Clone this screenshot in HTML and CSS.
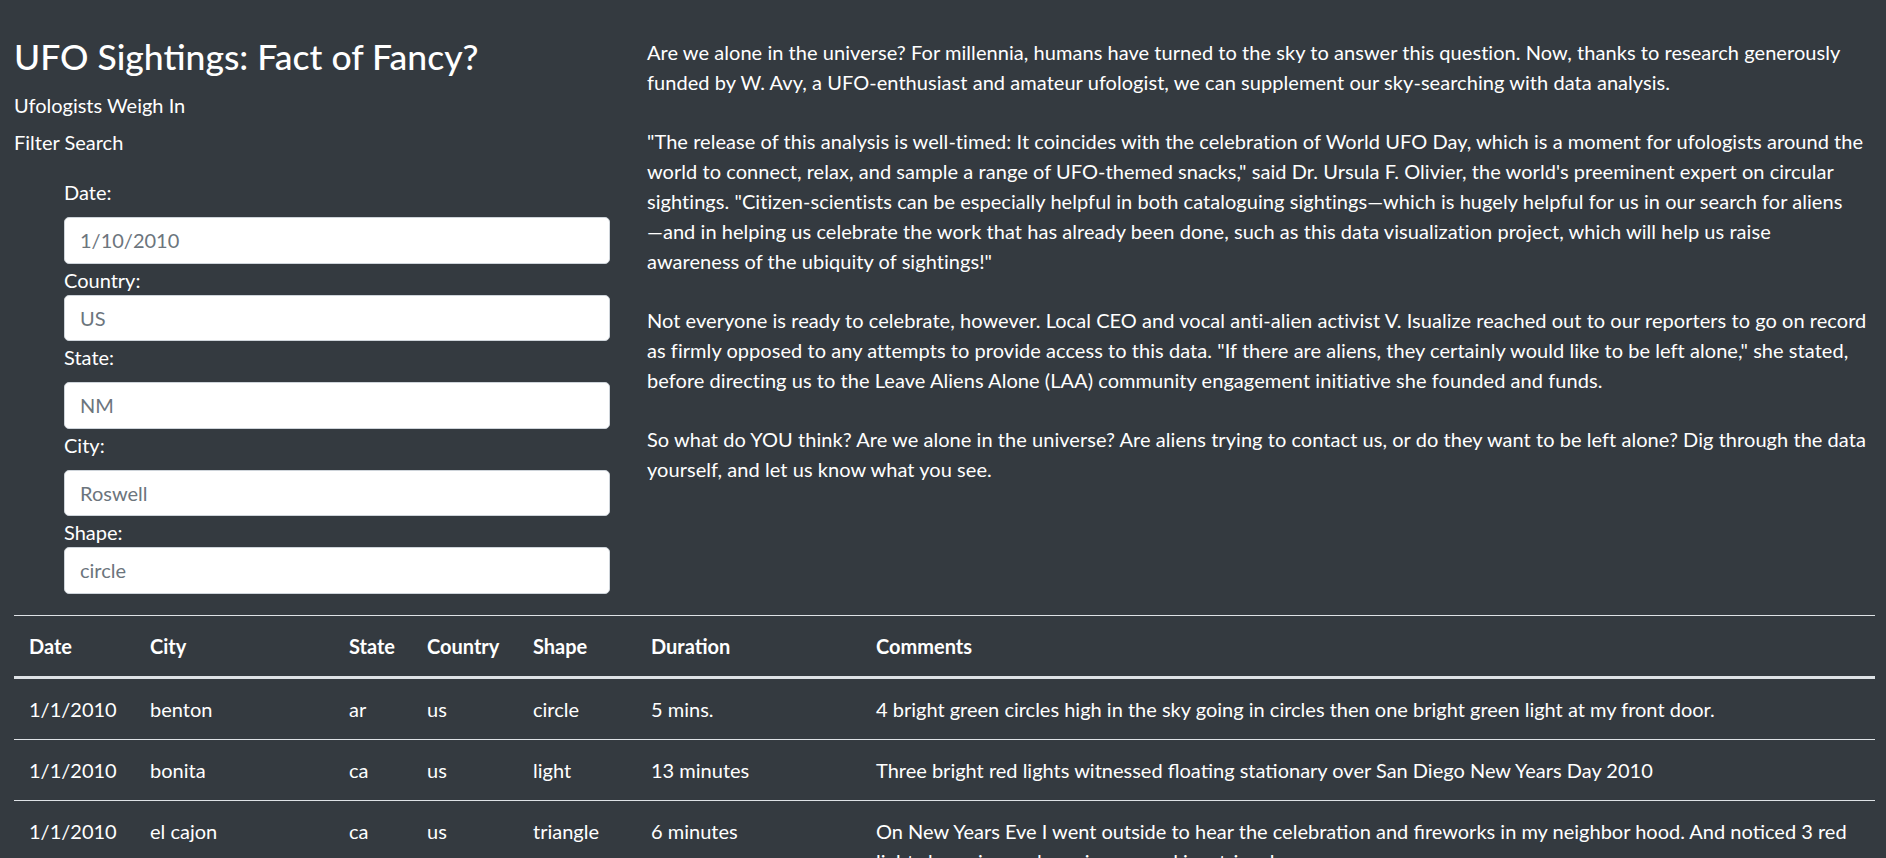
FILE: index.html
```html
<!DOCTYPE html>
<html lang="en">
<head>
<meta charset="utf-8">
<title>UFO Sightings</title>
<link rel="stylesheet" href="styles.css">
</head>
<body>
<div class="page">
  <div class="top">
    <div class="col-left">
      <h1 class="title">UFO Sightings: Fact of Fancy?</h1>
      <p class="sub sub-first">Ufologists Weigh In</p>
      <p class="sub">Filter Search</p>
      <form class="filters">
        <label class="lbl" for="date">Date:</label>
        <input class="field" id="date" type="text" placeholder="1/10/2010">
        <label class="lbl tight" for="country">Country:</label>
        <input class="field" id="country" type="text" placeholder="US">
        <label class="lbl" for="state">State:</label>
        <input class="field" id="state" type="text" placeholder="NM">
        <label class="lbl" for="city">City:</label>
        <input class="field" id="city" type="text" placeholder="Roswell">
        <label class="lbl tight" for="shape">Shape:</label>
        <input class="field" id="shape" type="text" placeholder="circle">
      </form>
    </div>
    <div class="col-right">
      <p>Are we alone in the universe? For millennia, humans have turned to the sky to answer this question. Now, thanks to research generously funded by W. Avy, a UFO-enthusiast and amateur ufologist, we can supplement our sky-searching with data analysis.</p>
      <p>"The release of this analysis is well-timed: It coincides with the celebration of World UFO Day, which is a moment for ufologists around the world to connect, relax, and sample a range of UFO-themed snacks," said Dr. Ursula F. Olivier, the world's preeminent expert on circular sightings. "Citizen-scientists can be especially helpful in both cataloguing sightings—which is hugely helpful for us in our search for aliens<span class="nowrap">—and</span> in helping us celebrate the work that has already been done, such as this data visualization project, which will help us raise <span class="nowrap">awareness of</span> the ubiquity of sightings!"</p>
      <p>Not everyone is ready to celebrate, however. Local CEO and vocal anti-alien activist V. Isualize reached out to our reporters to go on record as firmly opposed to any attempts to provide access to this data. "If there are aliens, they certainly would like to be left alone," she stated, before directing us to the Leave Aliens Alone (LAA) community engagement initiative she founded and funds.</p>
      <p>So what do YOU think? Are we alone in the universe? Are aliens trying to contact us, or do they want to be left alone? Dig through the data yourself, and let us know what you see.</p>
    </div>
  </div>
  <table class="sightings">
    <thead>
      <tr>
        <th class="c-date">Date</th>
        <th class="c-city">City</th>
        <th class="c-state">State</th>
        <th class="c-country">Country</th>
        <th class="c-shape">Shape</th>
        <th class="c-duration">Duration</th>
        <th class="c-comments">Comments</th>
      </tr>
    </thead>
    <tbody>
      <tr><td>1/1/2010</td><td>benton</td><td>ar</td><td>us</td><td>circle</td><td>5 mins.</td><td>4 bright green circles high in the sky going in circles then one bright green light at my front door.</td></tr>
      <tr><td>1/1/2010</td><td>bonita</td><td>ca</td><td>us</td><td>light</td><td>13 minutes</td><td>Three bright red lights witnessed floating stationary over San Diego New Years Day 2010</td></tr>
      <tr><td>1/1/2010</td><td>el cajon</td><td>ca</td><td>us</td><td>triangle</td><td>6 minutes</td><td>On New Years Eve I went outside to hear the celebration and fireworks in my neighbor hood. And noticed 3 red lights hovering and moving around in a triangle.</td></tr>
      <tr><td>1/1/2010</td><td>el cajon</td><td>ca</td><td>us</td><td>triangle</td><td>6 minutes</td><td>3 red lights in a triangle formation moving slowly to the east.</td></tr>
    </tbody>
  </table>
</div>
</body>
</html>
```
FILE: styles.css
```css
* { box-sizing: border-box; }
html, body {
  margin: 0;
  background: #343a40;
}
body {
  color: #fff;
  font-family: "Lato", "Noto Sans", sans-serif;
  font-size: 20px;
  line-height: 30px;
}
.page {
  padding: 0 11px 0 14px;
}
.top {
  display: grid;
  grid-template-columns: 596px 1fr;
  column-gap: 37px;
}
.col-left {
  padding-top: 35px;
}
.title {
  margin: 0;
  font-size: 35.5px;
  line-height: 43px;
  font-weight: 500;
}
.sub {
  margin: 7px 0 0;
}
.sub-first {
  margin-top: 12px;
}
.filters {
  display: flex;
  flex-direction: column;
  padding-left: 50px;
  margin-top: 20px;
}
.lbl {
  display: block;
  margin-bottom: 10px;
}
.lbl.tight {
  margin-bottom: 0;
}
.field {
  display: block;
  width: 100%;
  height: 46.5px;
  margin: 0 0 1px;
  padding: 7px 15px;
  border: 1px solid #ced4da;
  border-radius: 5px;
  background: #fff;
  color: #495057;
  font-family: inherit;
  font-size: 20px;
}
.field::placeholder {
  color: #6c757d;
  opacity: 1;
}
.col-right {
  padding-top: 37px;
  padding-right: 3px;
}
.col-right p {
  margin: 0 0 29px;
  letter-spacing: 0.05px;
}
.nowrap {
  white-space: nowrap;
}
.sightings {
  width: 100%;
  margin-top: 20px;
  border-collapse: collapse;
  border-top: 1px solid #dee2e6;
}
.sightings th,
.sightings td {
  padding: 15px;
  text-align: left;
  vertical-align: top;
}
.sightings th {
  font-weight: 700;
  border-bottom: 3px solid #dee2e6;
}
.sightings td {
  border-bottom: 1px solid #dee2e6;
}
.c-date { width: 121px; }
.c-city { width: 199px; }
.c-state { width: 78px; }
.c-country { width: 106px; }
.c-shape { width: 118px; }
.c-duration { width: 225px; }
```
